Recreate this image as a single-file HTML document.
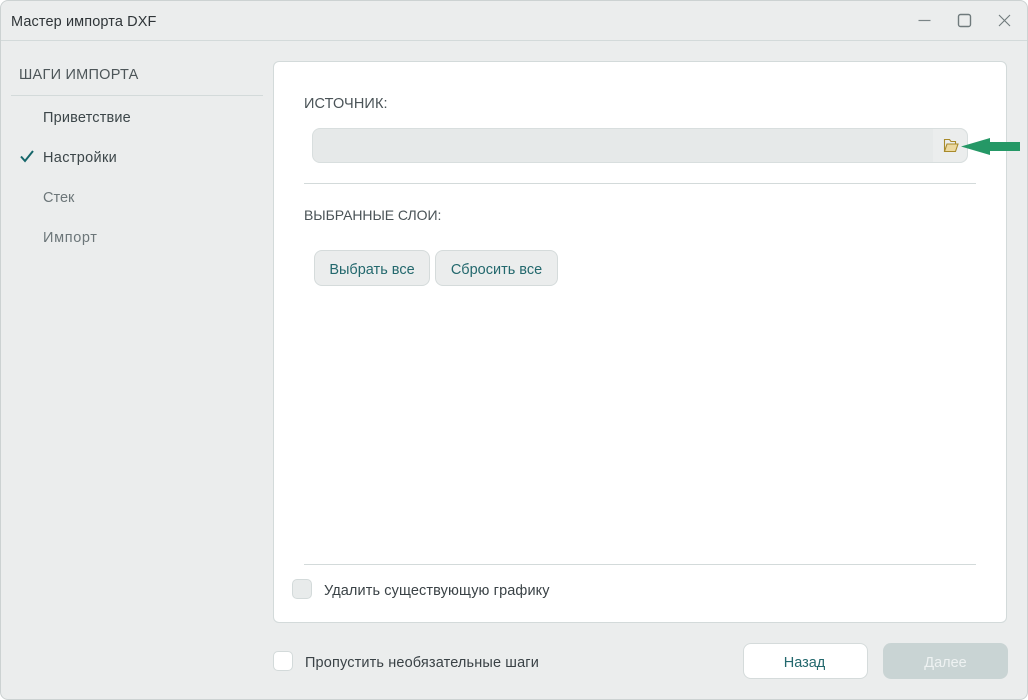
<!DOCTYPE html>
<html lang="ru">
<head>
<meta charset="utf-8">
<title>Мастер импорта DXF</title>
<style>
html,body{margin:0;padding:0;width:1028px;height:700px;overflow:hidden;background:#fff}
body{font-family:"Liberation Sans","Noto Sans CJK SC",sans-serif;font-size:14px;color:#3a4246}
.a{position:absolute}
.t{position:absolute;white-space:nowrap;line-height:20px;height:20px}
#win{position:absolute;left:0;top:0;width:1026px;height:698px;background:#ebeded;border:1px solid #ccd2d2;border-radius:8px;overflow:hidden}
.line{position:absolute;height:1px;background:#d3dada}
.btn{position:absolute;box-sizing:border-box;border:1px solid #d5dbdb;border-radius:8px;background:#ebeded;text-align:center;color:#23686d;line-height:38px;height:36px}
.cb{position:absolute;box-sizing:border-box;width:20px;height:20px;border:1px solid #d3dada;border-radius:5px}
</style>
</head>
<body>
<div id="win"></div>

<div class="t" style="left:11px;top:12px;color:#2f3538;font-size:14.5px;letter-spacing:.11px">Мастер импорта DXF</div>
<div class="line" style="left:1px;top:40px;width:1026px;height:1px"></div>

<svg class="a" style="left:915px;top:10px" width="100" height="22" viewBox="0 0 100 22" fill="none">
  <path d="M3.5 10.5H15.5" stroke="#7a8587" stroke-width="1.2"/>
  <rect x="43.5" y="4.5" width="12" height="12" rx="2" stroke="#6f7a7c" stroke-width="1.4"/>
  <path d="M84 5L95 16M95 5L84 16" stroke="#6f7a7c" stroke-width="1.1"/>
</svg>

<div class="t" style="left:19px;top:65px;color:#4d5659;font-size:14.5px;letter-spacing:.25px">ШАГИ ИМПОРТА</div>
<div class="line" style="left:11px;top:95px;width:252px"></div>
<div class="t" style="left:43px;top:108px;color:#3c4649;font-size:14.5px;letter-spacing:.18px">Приветствие</div>
<svg class="a" style="left:19px;top:148px" width="16" height="16" viewBox="0 0 16 16" fill="none">
  <path d="M2 8.5L6 13L14 3" stroke="#15666a" stroke-width="2"/>
</svg>
<div class="t" style="left:43px;top:148px;color:#3c4649;font-size:14.5px;letter-spacing:.33px">Настройки</div>
<div class="t" style="left:43px;top:188px;color:#6c7679;font-size:14.5px">Стек</div>
<div class="t" style="left:43px;top:228px;color:#6c7679;font-size:14.5px;letter-spacing:.65px">Импорт</div>

<div class="a" style="left:273px;top:61px;width:732px;height:560px;background:#fff;border:1px solid #d3dada;border-radius:6px"></div>

<div class="t" style="left:304px;top:94px;color:#4a5357;font-size:14.5px;letter-spacing:.12px">ИСТОЧНИК:</div>
<div class="a" style="left:312px;top:128px;width:654px;height:33px;background:#e6e9e9;border:1px solid #d8dede;border-radius:8px"></div>
<div class="a" style="left:933px;top:129px;width:34px;height:33px;background:#ebeded;border-radius:0 8px 8px 0"></div>
<svg class="a" style="left:943px;top:138px" width="16" height="15" viewBox="0 0 16 15" fill="none">
  <path d="M1.5 13.5V1.5H6.5L8 3.5H12.5V6" stroke="#a88a2a" stroke-width="1.1"/>
  <path d="M1.5 13.5L4 6H15L12.5 13.5Z" fill="#ecd9a0" stroke="#a88a2a" stroke-width="1.1"/>
</svg>
<svg class="a" style="left:960px;top:137px" width="62" height="19" viewBox="0 0 62 19">
  <path d="M1 9.5L30 1V5H60V14H30V18Z" fill="#259866"/>
</svg>

<div class="line" style="left:304px;top:183px;width:672px"></div>
<div class="t" style="left:304px;top:205px;color:#4a5357;font-size:14px;letter-spacing:-.06px">ВЫБРАННЫЕ СЛОИ:</div>

<div class="btn" style="left:314px;top:250px;width:116px;font-size:14.5px">Выбрать все</div>
<div class="btn" style="left:435px;top:250px;width:123px;font-size:14.5px">Сбросить все</div>

<div class="line" style="left:304px;top:564px;width:672px"></div>
<div class="cb" style="left:292px;top:579px;background:#e8ebeb"></div>
<div class="t" style="left:324px;top:581px;color:#3a4246;font-size:14.5px;letter-spacing:.11px">Удалить существующую графику</div>

<div class="cb" style="left:273px;top:651px;background:#fff"></div>
<div class="t" style="left:305px;top:653px;color:#3a4246;font-size:14.5px;letter-spacing:.14px">Пропустить необязательные шаги</div>

<div class="btn" style="left:743px;top:643px;width:125px;background:#fff;font-size:14.5px;padding-right:2px">Назад</div>
<div class="btn" style="left:883px;top:643px;width:125px;background:#c9d4d4;border-color:#c9d4d4;color:#eef2f2;font-size:14.5px">Далее</div>
</body>
</html>
